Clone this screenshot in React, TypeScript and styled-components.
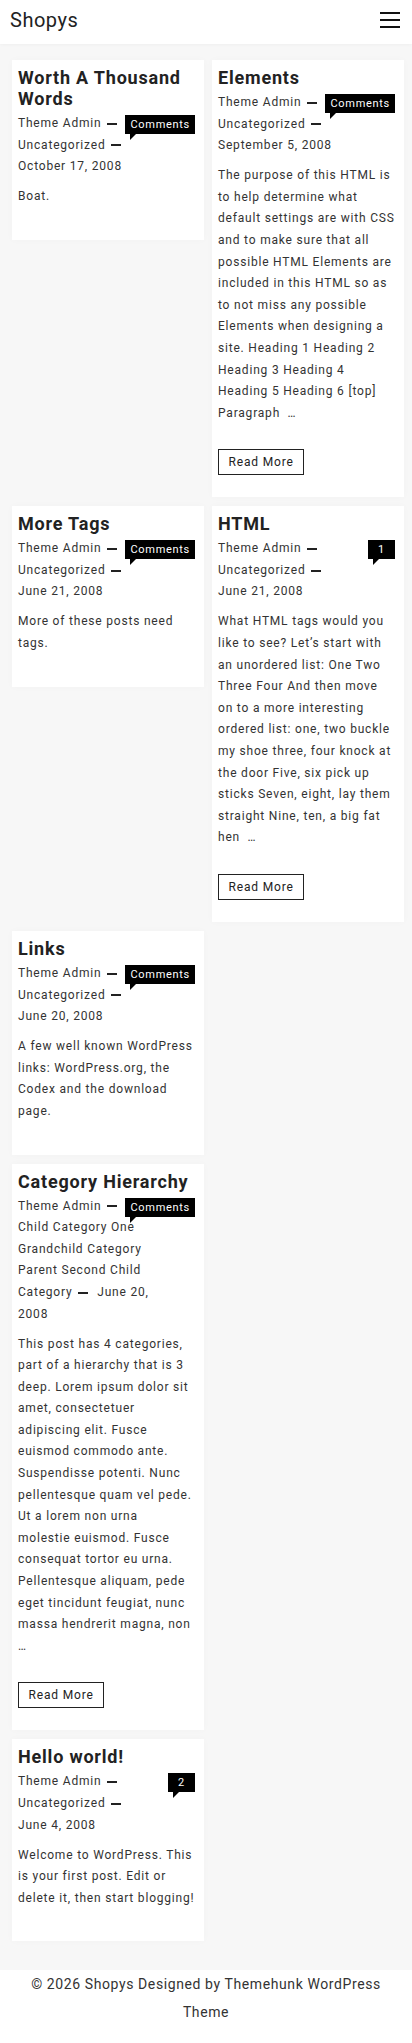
import React from "react";
import styled, { createGlobalStyle } from "styled-components";

const GlobalStyle = createGlobalStyle`
  * { box-sizing: border-box; }
  html, body { margin: 0; padding: 0; }
  body {
    background: #ffffff;
    font-family: Roboto, "Liberation Sans", Arial, sans-serif;
    color: #333333;
    -webkit-font-smoothing: antialiased;
  }
`;

const Header = styled.header`
  height: 44px;
  background: #ffffff;
  display: flex;
  align-items: center;
  justify-content: space-between;
  padding: 0 12px 0 10px;
  position: relative;
  z-index: 1;
  box-shadow: 0 1px 3px rgba(0, 0, 0, 0.03);
`;

const Logo = styled.a`
  font-size: 20px;
  letter-spacing: 0.5px;
  color: #222222;
  text-decoration: none;
  line-height: 24px;
  margin-top: -4px;
`;

const MenuButton = styled.button`
  width: 20px;
  height: 16px;
  padding: 0;
  border: 0;
  background: transparent;
  display: flex;
  flex-direction: column;
  justify-content: space-between;
  margin-top: -4px;
  cursor: pointer;
`;

const MenuLine = styled.span`
  display: block;
  height: 2px;
  width: 100%;
  background: #111111;
`;

const Main = styled.main`
  background: #f7f7f7;
  padding: 16px 8px 29px 12px;
`;

const Grid = styled.div`
  display: grid;
  grid-template-columns: 1fr 1fr;
  column-gap: 8px;
  row-gap: 9px;
  align-items: start;
`;

const Card = styled.article<{ $solo?: boolean; $inset?: number }>`
  background: #ffffff;
  padding: 7px ${(p) => 9 + (p.$inset ?? 0)}px 22px 6px;
  box-shadow: 0 0 8px rgba(0, 0, 0, 0.025);
  grid-column: ${(p) => (p.$solo ? "1" : "auto")};
`;

const Title = styled.h2`
  margin: 0;
  font-size: 18px;
  line-height: 21px;
  font-weight: 700;
  letter-spacing: 0.8px;
  color: #222222;
`;

const Meta = styled.div<{ $inset?: number }>`
  position: relative;
  margin: 4px -${(p) => p.$inset ?? 0}px 0 0;
  padding-right: 43px;
  font-size: 12px;
  line-height: 21.6px;
  letter-spacing: 0.8px;
  color: #333333;
`;

const Badge = styled.span`
  position: absolute;
  top: 2px;
  right: 0;
  min-width: 27px;
  height: 19px;
  padding: 0 5px;
  background: #000000;
  color: #ffffff;
  font-size: 11px;
  line-height: 19px;
  letter-spacing: 0.7px;
  text-align: center;
  &::after {
    content: "";
    position: absolute;
    left: 5px;
    top: 100%;
    width: 0;
    height: 0;
    border-top: 6px solid #000000;
    border-right: 6px solid transparent;
  }
`;

const NoWrap = styled.span`
  white-space: nowrap;
`;

const Dash = styled.span`
  display: inline-block;
  width: 10px;
  height: 2px;
  background: #222222;
  vertical-align: middle;
  margin: 0 5px 0 6px;
`;

const Excerpt = styled.p`
  margin: 8.4px 0 10px;
  font-size: 12px;
  line-height: 21.6px;
  letter-spacing: 0.8px;
  color: #333333;
`;

const ReadMore = styled.a`
  display: inline-flex;
  align-items: center;
  height: 26px;
  margin-top: 15px;
  padding: 0 9.5px;
  border: 1px solid #222222;
  font-size: 12px;
  letter-spacing: 0.85px;
  color: #222222;
  text-decoration: none;
`;

const Footer = styled.footer`
  background: #ffffff;
  padding: 0 20px 16px;
  text-align: center;
  font-size: 14px;
  line-height: 28px;
  letter-spacing: 0.6px;
  color: #333333;
`;

type Post = {
  title: string;
  cats: string;
  date: string;
  badge: string;
  excerpt: string;
  more?: boolean;
  solo?: boolean;
  inset?: number;
};

const posts: Post[] = [
  {
    title: "Worth A Thousand Words",
    cats: "Uncategorized",
    date: "October 17, 2008",
    badge: "Comments",
    excerpt: "Boat.",
  },
  {
    title: "Elements",
    cats: "Uncategorized",
    date: "September 5, 2008",
    badge: "Comments",
    excerpt:
      "The purpose of this HTML is to help determine what default settings are with CSS and to make sure that all possible HTML Elements are included in this HTML so as to not miss any possible Elements when designing a site. Heading 1 Heading 2 Heading 3 Heading 4 Heading 5 Heading 6 [top] Paragraph \u00a0\u2026",
    more: true,
  },
  {
    title: "More Tags",
    cats: "Uncategorized",
    date: "June 21, 2008",
    badge: "Comments",
    excerpt: "More of these posts need tags.",
  },
  {
    title: "HTML",
    cats: "Uncategorized",
    date: "June 21, 2008",
    badge: "1",
    excerpt:
      "What HTML tags would you like to see? Let\u2019s start with an unordered list: One Two Three Four And then move on to a more interesting ordered list: one, two buckle my shoe three, four knock at the door Five, six pick up sticks Seven, eight, lay them straight Nine, ten, a big fat hen \u00a0\u2026",
    more: true,
  },
  {
    title: "Links",
    cats: "Uncategorized",
    date: "June 20, 2008",
    badge: "Comments",
    excerpt:
      "A few well known WordPress links: WordPress.org, the Codex and the download page.",
    solo: true,
  },
  {
    title: "Category Hierarchy",
    cats: "Child Category One Grandchild Category Parent Second Child Category",
    date: "June 20, 2008",
    badge: "Comments",
    excerpt:
      "This post has 4 categories, part of a hierarchy that is 3 deep. Lorem ipsum dolor sit amet, consectetuer adipiscing elit. Fusce euismod commodo ante. Suspendisse potenti. Nunc pellentesque quam vel pede. Ut a lorem non urna molestie euismod. Fusce consequat tortor eu urna. Pellentesque aliquam, pede eget tincidunt feugiat, nunc massa hendrerit magna, non \u2026",
    more: true,
    solo: true,
    inset: 3,
  },
  {
    title: "Hello world!",
    cats: "Uncategorized",
    date: "June 4, 2008",
    badge: "2",
    excerpt:
      "Welcome to WordPress. This is your first post. Edit or delete it, then start blogging!",
    solo: true,
  },
];

function MetaLine({ post }: { post: Post }) {
  const words = post.cats.split(" ");
  const last = words.pop();
  return (
    <Meta $inset={post.inset}>
      <Badge>{post.badge}</Badge>
      <NoWrap>
        Theme Admin
        <Dash />
      </NoWrap>{" "}
      {words.length > 0 ? words.join(" ") + " " : null}
      <NoWrap>
        {last}
        <Dash />
      </NoWrap>{" "}
      {post.date}
    </Meta>
  );
}

export default function App() {
  return (
    <>
      <GlobalStyle />
      <Header>
        <Logo href="#">Shopys</Logo>
        <MenuButton aria-label="Menu">
          <MenuLine />
          <MenuLine />
          <MenuLine />
        </MenuButton>
      </Header>
      <Main>
        <Grid>
          {posts.map((post) => (
            <Card key={post.title} $solo={post.solo} $inset={post.inset}>
              <Title>{post.title}</Title>
              <MetaLine post={post} />
              <Excerpt>{post.excerpt}</Excerpt>
              {post.more ? <ReadMore href="#">Read More</ReadMore> : null}
            </Card>
          ))}
        </Grid>
      </Main>
      <Footer>© 2026 Shopys Designed by Themehunk WordPress Theme</Footer>
    </>
  );
}
